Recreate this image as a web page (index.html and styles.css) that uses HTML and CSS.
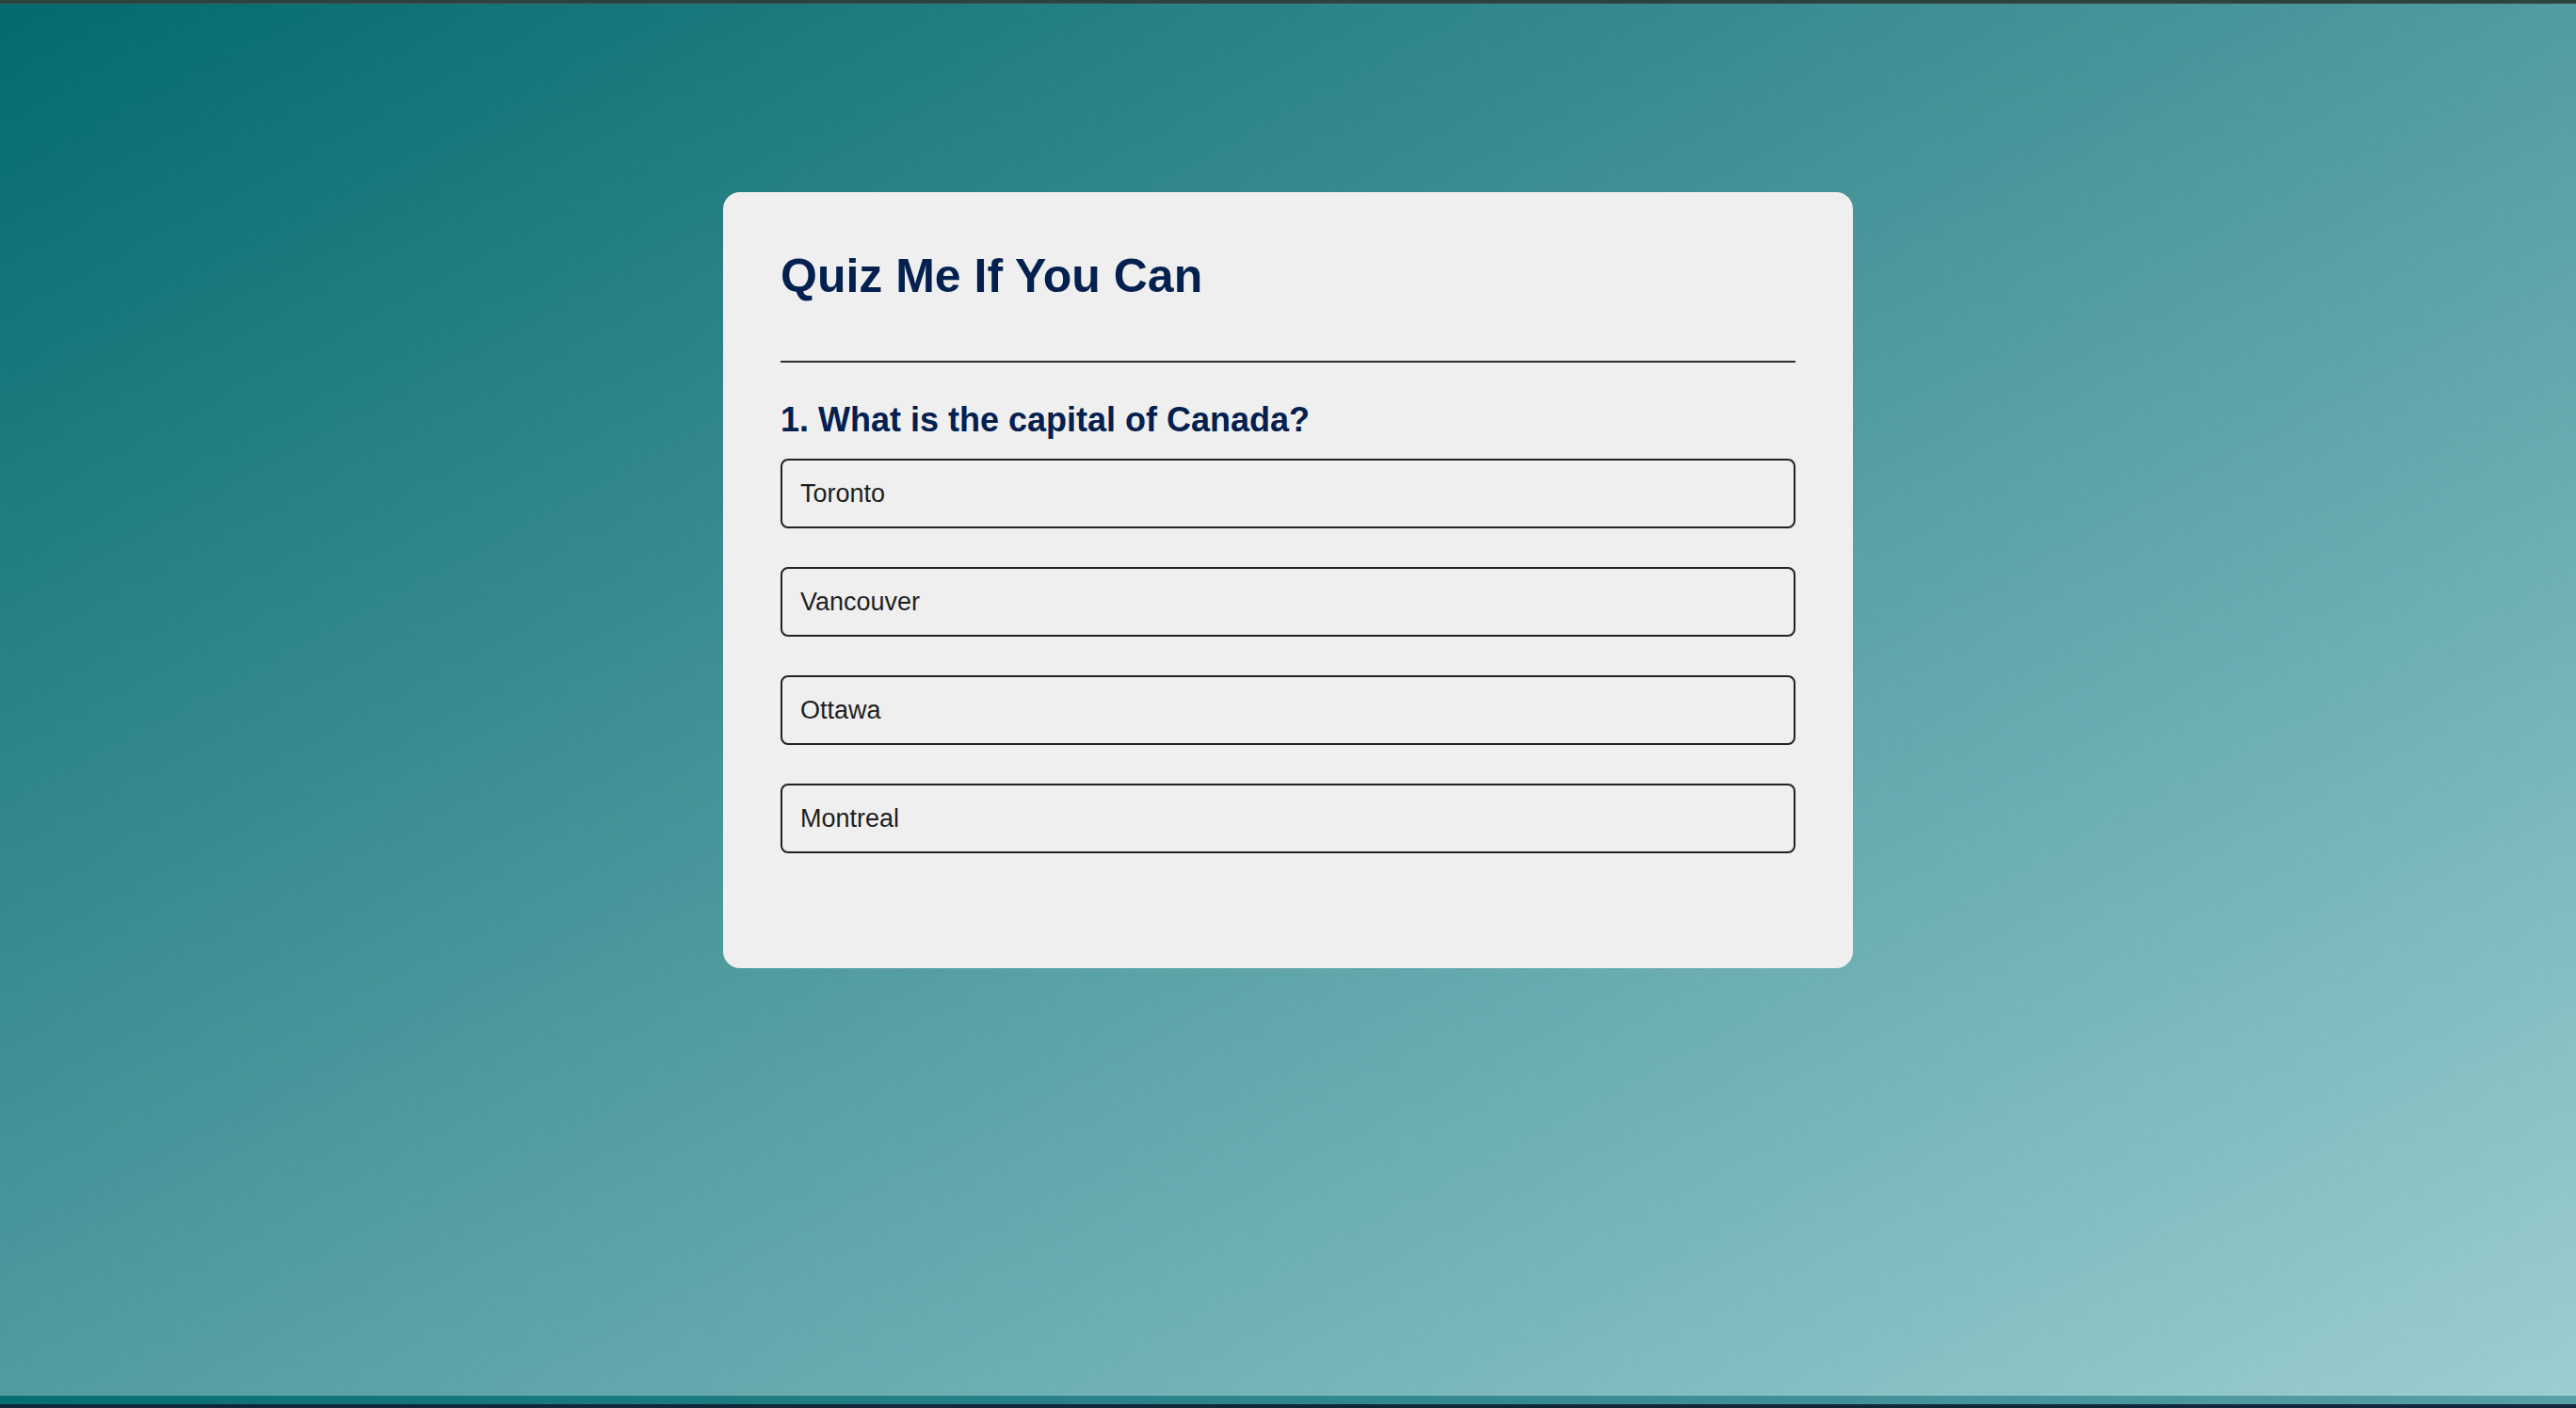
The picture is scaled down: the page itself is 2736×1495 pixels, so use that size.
FILE: index.html
```html
<!DOCTYPE html>
<html lang="en">
<head>
<meta charset="utf-8">
<title>Quiz Me If You Can</title>
<link rel="stylesheet" href="styles.css">
</head>
<body>
<div class="topbar"></div>
<main class="page">
  <section class="card">
    <h1 class="title">Quiz Me If You Can</h1>
    <hr class="divider">
    <h2 class="question">1. What is the capital of Canada?</h2>
    <div class="options">
      <button class="option" type="button">Toronto</button>
      <button class="option" type="button">Vancouver</button>
      <button class="option" type="button">Ottawa</button>
      <button class="option" type="button">Montreal</button>
    </div>
  </section>
</main>
<div class="bottom-strip"></div>
<div class="bottom-edge"></div>
</body>
</html>
```
FILE: styles.css
```css
* { box-sizing: border-box; }

html, body {
  margin: 0;
  padding: 0;
  height: 1495px;
  overflow: hidden;
  font-family: "Liberation Sans", Arial, sans-serif;
  background: #10283a;
}

.topbar {
  height: 4px;
  background: #2b423f;
  border-bottom: 1px solid #3f4c4c;
}

.page {
  height: 1478px;
  padding-top: 200px;
  background: linear-gradient(to bottom right, #046a6f 0%, #9ccdd1 100%);
}

.bottom-strip {
  height: 9px;
  background: linear-gradient(to right, #066d72, #58a0a5);
}

.bottom-edge {
  height: 4px;
  background: #10283a;
}

.card {
  width: 1200px;
  margin: 0 auto;
  padding: 62px 61px 122px;
  background: #efefef;
  border-radius: 18px;
}

.title {
  margin: 0 0 62px;
  font-size: 50px;
  line-height: 55px;
  font-weight: 700;
  color: #03204f;
}

.divider {
  margin: 0;
  border: 0;
  height: 2px;
  background: #2e2e2e;
}

.question {
  margin: 41px 0 21px;
  font-size: 36px;
  line-height: 40px;
  font-weight: 700;
  color: #03204f;
}

.options {
  display: flex;
  flex-direction: column;
  gap: 41px;
}

.option {
  display: flex;
  align-items: center;
  width: 100%;
  height: 74px;
  padding: 0 19px;
  margin: 0;
  border: 2px solid #222;
  border-radius: 8px;
  background: #efefef;
  font-family: "Liberation Sans", Arial, sans-serif;
  font-size: 27px;
  color: #1e1e1e;
  text-align: left;
  cursor: pointer;
}
```
